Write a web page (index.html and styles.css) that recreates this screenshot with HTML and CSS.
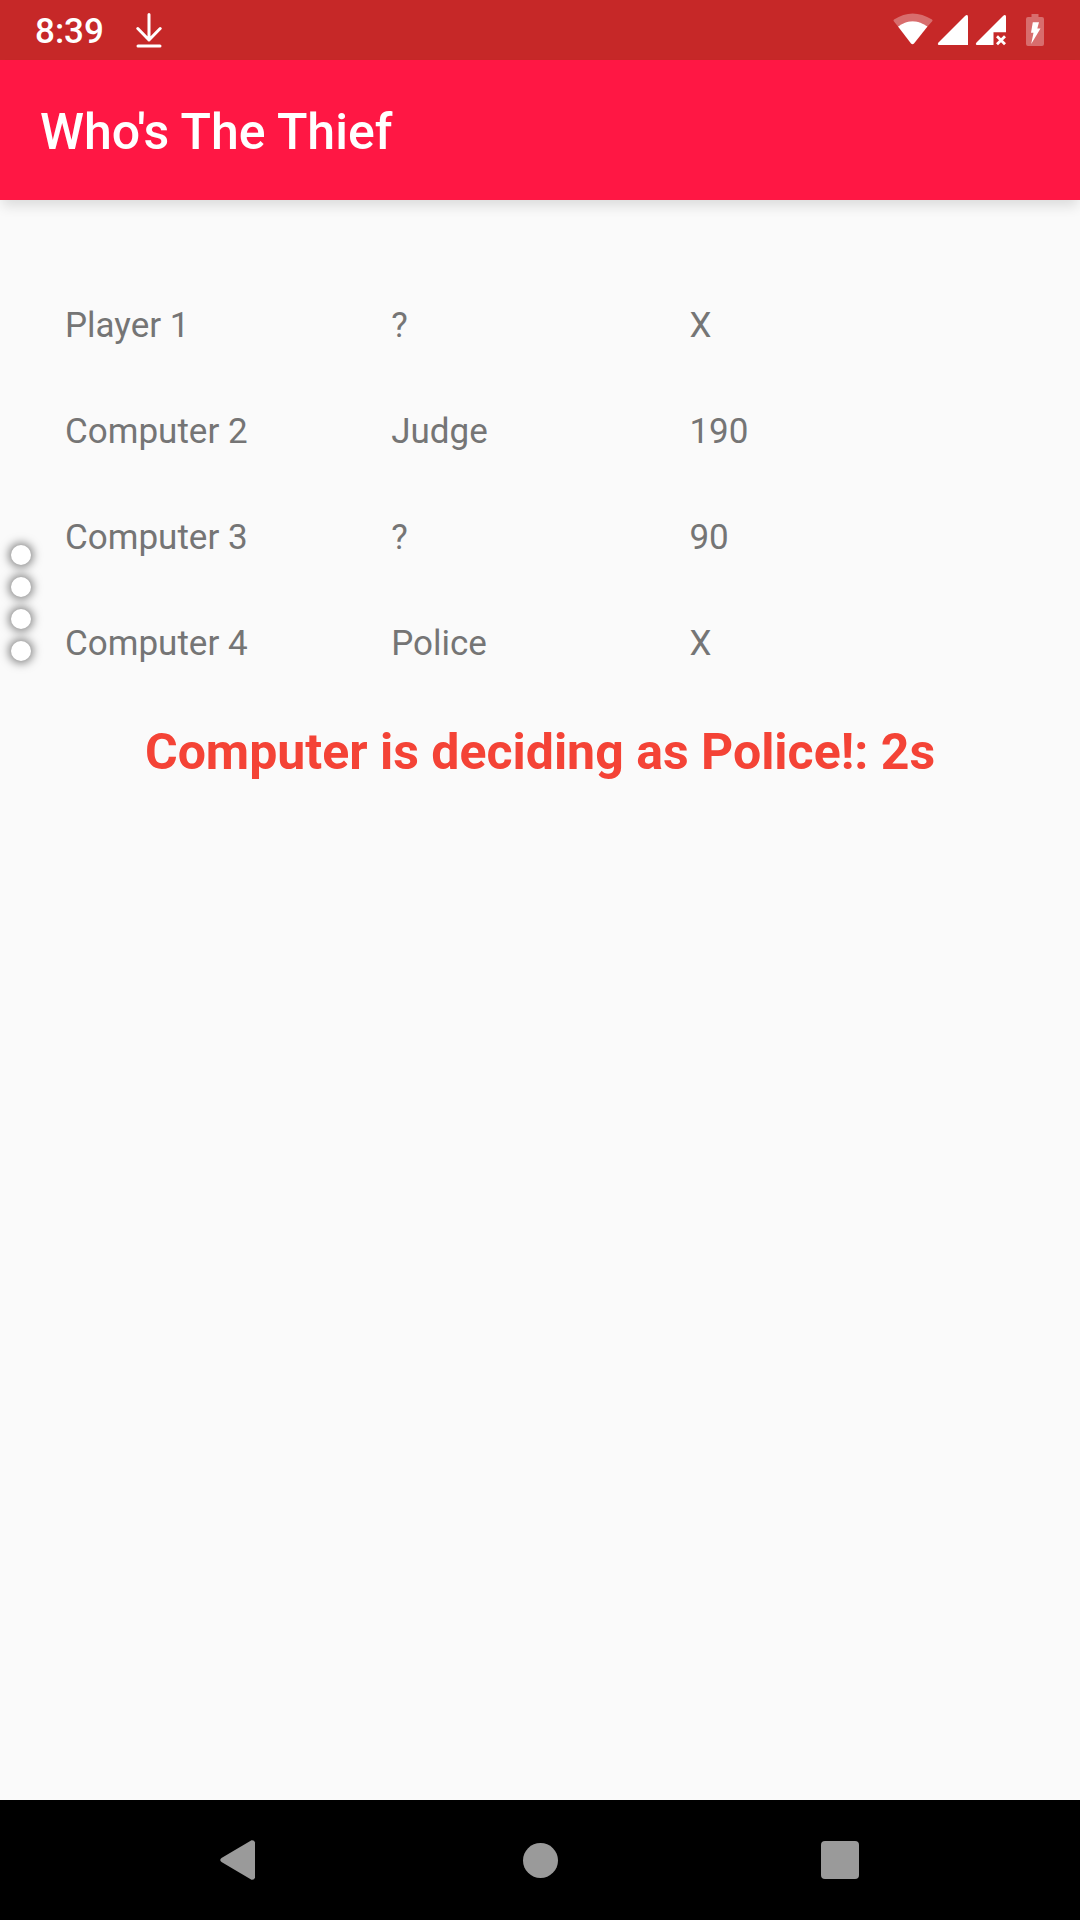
FILE: index.html
```html
<!DOCTYPE html>
<html lang="en">
<head>
<meta charset="utf-8">
<meta name="viewport" content="width=device-width, initial-scale=1">
<title>Who's The Thief</title>
<link rel="stylesheet" href="styles.css">
</head>
<body>
<div class="screen">
  <div class="status-bar">
    <time class="clock">8:39</time>
    <svg class="download-icon" width="26" height="36" viewBox="0 0 26 36" fill="none" stroke="#fff" stroke-width="3" stroke-linecap="round" stroke-linejoin="round" aria-hidden="true">
      <path d="M13 2.500V28M1.800 16.500L13 28L24.200 16.500M2 34H24"/>
    </svg>
    <div class="status-icons">
      <svg width="40" height="34" viewBox="0 0 40 34" fill="#fff" aria-hidden="true">
        <path opacity=".32" d="M1 8.500Q0 7.500 1 6.500Q19.500-5.500 39 6.500Q40 7.500 39 8.500L34.500 13.500Q19.500 3 5 13.500Z"/>
        <path d="M5 13.500Q19.500 3 34.500 13.500L21 30.500Q19.500 32 18 30.500Z"/>
      </svg>
      <svg width="34" height="34" viewBox="0 0 34 34" fill="#fff" aria-hidden="true">
        <path d="M31 3.500V32H1.500Q0 31 1.500 29.500L28 3Q30.500 1 31 3.500Z"/>
      </svg>
      <svg width="34" height="34" viewBox="0 0 34 34" fill="#fff" aria-hidden="true">
        <path d="M31 3.500V19.200H18.500V32H1.500Q0 31 1.500 29.500L28 3Q30.500 1 31 3.500Z"/>
        <path d="M22 23.300L30 31.300M30 23.300L22 31.300" fill="none" stroke="#fff" stroke-width="2.800"/>
      </svg>
      <svg class="battery-icon" width="18" height="34" viewBox="0 0 18 34" fill="#fff" aria-hidden="true">
        <path opacity=".32" d="M5.500 1H12.500V4H16Q18 4 18 6V31Q18 33 16 33H2Q0 33 0 31V6Q0 4 2 4H5.500Z"/>
        <path d="M6.800 9.300H13L11.300 15.500H14.500L5.200 31L7.500 19.800H5Z"/>
      </svg>
    </div>
  </div>
  <header class="app-bar">
    <h1 class="app-title">Who's The Thief</h1>
  </header>
  <main class="content">
    <table class="players">
      <colgroup><col class="col-name"><col class="col-role"><col class="col-score"></colgroup>
      <tbody>
        <tr><td>Player 1</td><td>?</td><td>X</td></tr>
        <tr><td>Computer 2</td><td>Judge</td><td>190</td></tr>
        <tr><td>Computer 3</td><td>?</td><td>90</td></tr>
        <tr><td>Computer 4</td><td>Police</td><td>X</td></tr>
      </tbody>
    </table>
    <p class="message">Computer is deciding as Police!: 2s</p>
  </main>
  <nav class="nav-bar" aria-label="System navigation">
    <button class="nav-button" type="button" aria-label="Back">
      <svg width="40" height="40" viewBox="0 0 40 40" fill="#9a9a9a" aria-hidden="true"><path d="M35 2.500V37.500Q34.500 40 31.500 39.700L1.500 22Q-1 20 1.500 18L31.500 .3Q34.500 0 35 2.500Z"/></svg>
    </button>
    <button class="nav-button" type="button" aria-label="Home">
      <svg width="40" height="40" viewBox="0 0 40 40" fill="#9a9a9a" aria-hidden="true"><circle cx="20.500" cy="20.500" r="17.500"/></svg>
    </button>
    <button class="nav-button" type="button" aria-label="Recent apps">
      <svg width="40" height="40" viewBox="0 0 40 40" fill="#9a9a9a" aria-hidden="true"><rect x="1" y="1" width="38" height="38" rx="4"/></svg>
    </button>
  </nav>
  <div class="edge-handle" aria-hidden="true">
    <span class="dot"></span><span class="dot"></span><span class="dot"></span><span class="dot"></span>
  </div>
</div>
</body>
</html>
```

FILE: styles.css
```css
* { box-sizing: border-box; }

body {
  margin: 0;
  font-family: Roboto, "Liberation Sans", sans-serif;
  background: #fafafa;
}

.screen {
  position: relative;
  display: flex;
  flex-direction: column;
  min-height: 100vh;
}

.status-bar {
  display: flex;
  align-items: center;
  height: 60px;
  padding: 0 36px 0 35px;
  background: #c62828;
  color: #fff;
}

.status-bar svg { display: block; }

.clock {
  padding-top: 3px;
  font-size: 35px;
  font-weight: 500;
  line-height: 40px;
}

.download-icon { margin-left: 32px; }

.status-icons {
  display: flex;
  gap: 4px;
  margin-left: auto;
}

.battery-icon { margin-left: 13px; }

.app-bar {
  display: flex;
  align-items: center;
  height: 140px;
  padding: 4px 40px 0;
  background: #ff1744;
  box-shadow: 0 8px 12px -2px rgba(0, 0, 0, 0.12);
}

.app-title {
  margin: 0;
  color: #fff;
  font-size: 50px;
  font-weight: 500;
  line-height: 60px;
}

.content {
  flex: 1;
  padding-top: 73px;
}

.players {
  width: calc(100% - 148px);
  margin: 0 83px 0 65px;
  border-collapse: collapse;
  table-layout: fixed;
  color: #757575;
  font-size: 35px;
  line-height: 40px;
}

.col-name { width: 35%; }
.col-role { width: 32%; }

.players td {
  height: 106px;
  padding: 0;
}

.message {
  margin: 25px 0 0;
  color: #f44336;
  font-size: 50px;
  font-weight: 700;
  line-height: 60px;
  text-align: center;
}

.nav-bar {
  display: flex;
  justify-content: center;
  height: 120px;
  background: #000;
}

.nav-button {
  display: flex;
  align-items: center;
  justify-content: center;
  width: 300px;
  padding: 0;
  border: 0;
  background: none;
}

/* floats over the left edge of the app */
.edge-handle {
  position: absolute;
  top: 545px;
  left: 11px;
  display: flex;
  flex-direction: column;
  gap: 12px;
}

.dot {
  width: 20px;
  height: 20px;
  border-radius: 50%;
  background: #fff;
  box-shadow: 0 0 10px 2px rgba(0, 0, 0, 0.5);
}
```
